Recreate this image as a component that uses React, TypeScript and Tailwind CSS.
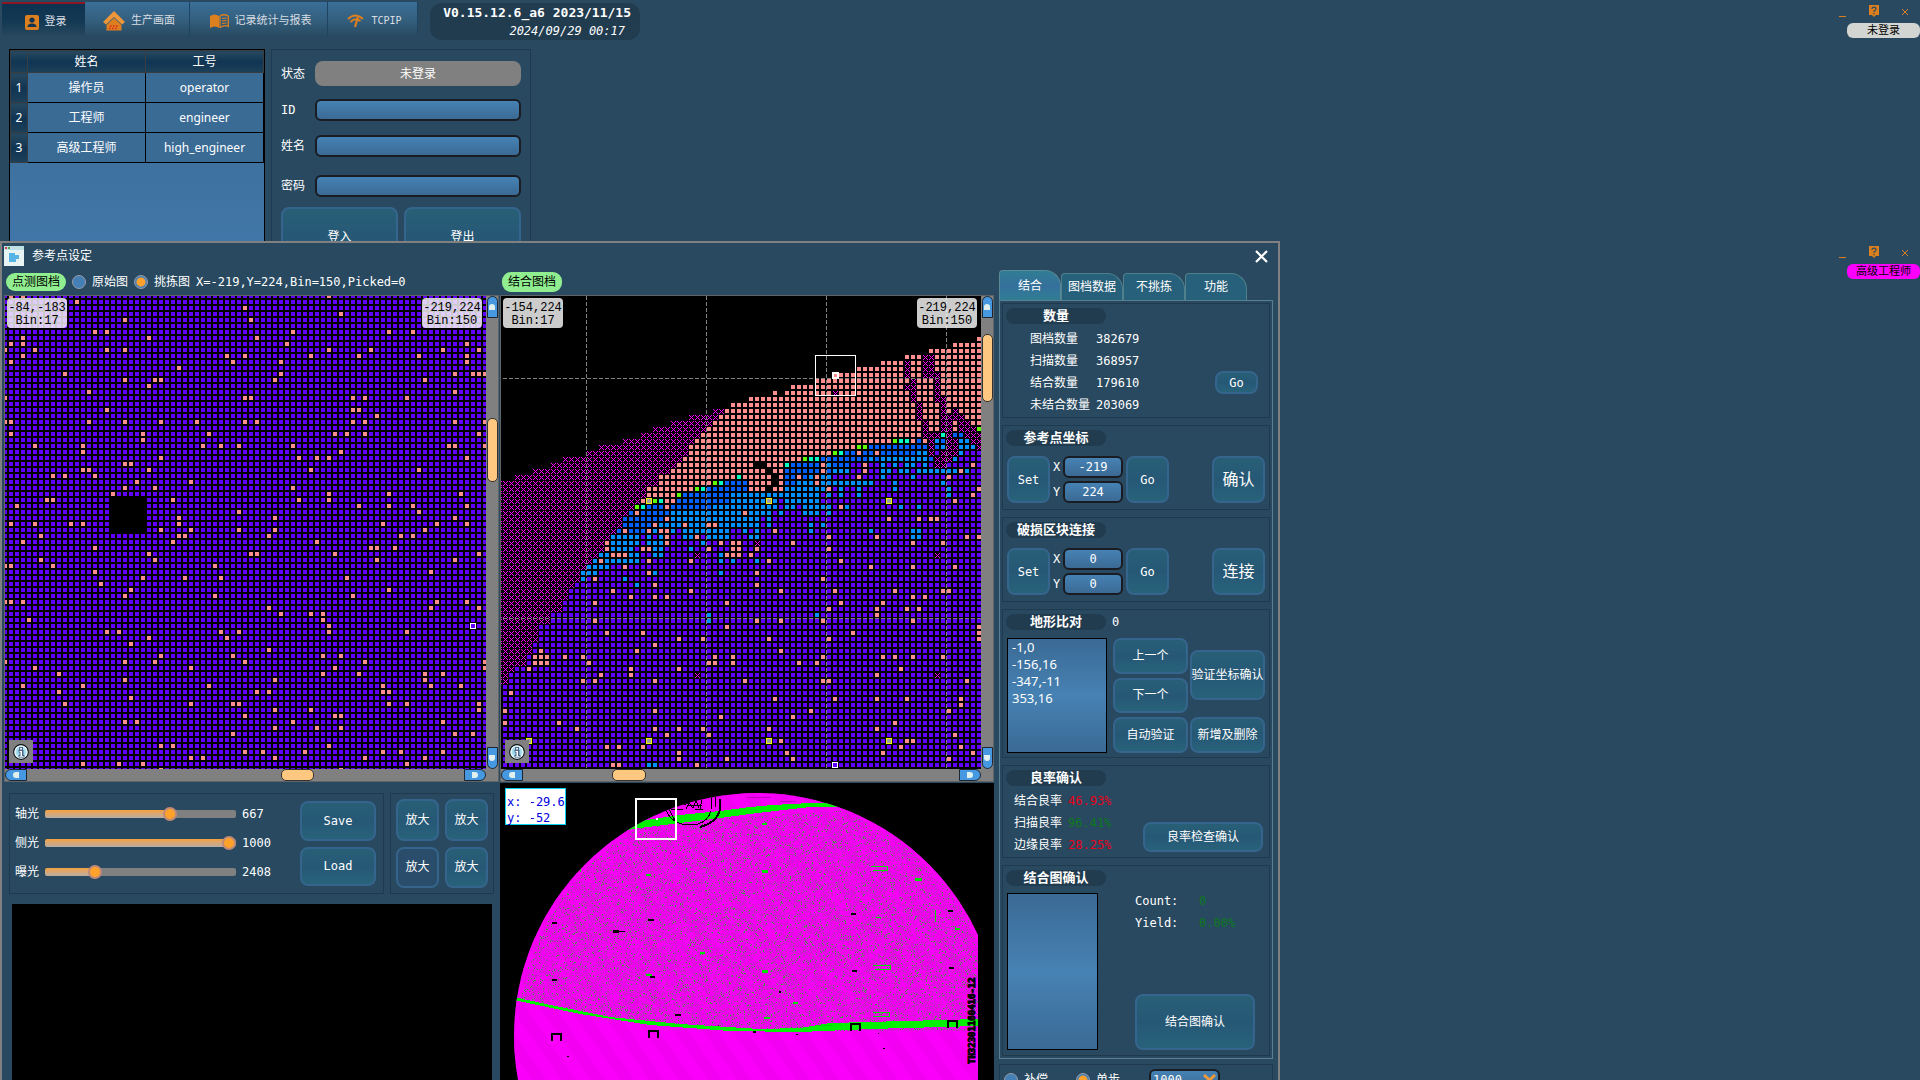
import React, { useState } from "react";
import type { ReactNode } from "react";

/* ---------- shared styles ---------- */

const btnBase =
  "flex items-center justify-center whitespace-nowrap rounded-lg border-2 border-[#35648c] bg-linear-to-b from-[#285f76] via-[#265876] to-[#28627a] text-white";
const btn = `${btnBase} text-xs`;
const field =
  "min-w-0 rounded-md border-2 border-[#191c22] bg-linear-to-b from-[#4682b4] to-[#3b6a94] text-xs text-white outline-none";
const box = "border border-[#1f3a4e]";

/* ---------- die maps ---------- */

const CELL = 6;

// Rejected dies of the probe map: one entry per row, columns separated by spaces.
const probeRows = [
  "1 3 54", "12", "40", "56", "20 41", "", "15 17 48 64 68", "3 24 42", "1 3 47 77",
  "0 5 17 20 54 61 73 79", "3 37 40 51 59 69 77", "1 38 46 77", "29", "10 46 75 78 79 80",
  "20 25 26 45 70", "24", "14 75", "0 40 41 58 60 67", "", "17 58 59", "62",
  "0 1 14 20 26 32 40 42 58 60 75 80", "", "1 23 34 55 57 60 79", "23",
  "5 13 33 36 39 48 74 75 80", "13 56", "26 49 52 54 77", "20 21", "13 14 24 51 69",
  "8 10 15", "22 31", "20 25 48", "18 54 64 76", "7 8 28 49 54", "2 59 64 68 77", "39 69",
  "29 45 75", "1 5 11 13 29 63 72 77", "26 31 39 45 70", "6 29 30 44 66 68", "3 28 52",
  "15 61 62 65", "24 41 42 55 79", "6 25 62 75", "0 1 8 35", "15 71", "23 30 36 57", "16",
  "21 64", "20 35 58", "0 1 3 72 77", "44 71 79", "46 51 53", "4 53", "54",
  "17 19 36 39 54 67", "24 37", "21", "44", "26 38 53 56", "0 20 25 40 60 80", "5 31 55 80",
  "9 53 59 70 73", "20 45 70", "3 13 34 63 71 76", "9 42 44 63 64", "21",
  "10 31 38 39 64 67 79", "45 51 79", "40 55 56", "20 22 48 73", "45 52 56", "38 75 78", "",
  "26 28 54", "40 43 50 63 66 73", "31 33 45 60 70", "13 19 23 67", "26 56",
];

// Combined map. "12v" starts a run of type v at column 12; "|p18 31" overrides single dies.
// m unmatched, p reject, v bin 150, s/b/c/l other bins, y reference die, k empty
const mergedRows: Record<number, string> = {
  7: "79p", 8: "75p", 9: "71p", 10: "67p 70m 72p", 11: "63p 67m 68p 70m 72p",
  12: "59p 67m 68p 70m 72p", 13: "55p 67m 68p 70m 73p", 14: "52p 68m 69p 72m 73p",
  15: "48p 67m 69p 72m 73p", 16: "45p 46k 47p 55m 56p 68m 69p 72m 73p",
  17: "41p 68m 69p 72m 74p", 18: "38p 69m 70p 73m 74p",
  19: "35m 37p 69m 70p 73m 74p 75m 76p", 20: "31m 36p 69m 70p 73m 77p",
  21: "28m 35p 70m 71p 73m 75p 76m 78p", 22: "25m 34p 70m 71p 73m 75p 76m 79l",
  23: "23m 33p 70m 73c 74m 75b 77m",
  24: "20m 32p 65l 66c 68p 69b 70p 71m 72s 73b 74m 76s 78m",
  25: "16m 31p 59l 61b 71m 72b 73s 74m 76s 79m",
  26: "14m 31p 55l 56c 57b 59p 60b 62p 63b 69s 71m 72v 73m 76s 77v",
  27: "10m 30p 50l 51c 53b 61s 62b 63s 71b 72m 75s 76v",
  28: "8m 29p 42k 44p 47c 48b 53p 54s 55b 58v 60p 61v 63s 64v 65s 66v 67s 69v 70s 71v 72m 74v 78p 79v",
  29: "5m 28p 44k 45p 47b 53p 54b 55s 58v 60p 61v 63s 65v 66s 68v 69s 76p 77s 78v",
  30: "2m 26p 39c 40p 45k 46p 47b 49p 50b 51s 52p 53s 55v 59p 60v 63s 64v 68s 69v 74p 75v",
  31: "-1m 26p 35l 36c 37b 41p 45k 46p 47b 49s 52p 53s 62v 65s 66v 73s 74v",
  32: "-1m 24p 32l 33c 34b 41p 44k 45p 47s 54p 55v 56s 57v|s59 65 74|p79",
  33: "-1m 24p 29l 30b 38s 53v 54s 55v|s56 59 74|p78",
  34: "-1m 23p 24y 25l 26c 27p 29b 38s 53v|v46|y44 64|p75",
  35: "-1m 22l 23c 24b 35s 55v|v46 49|p27 56|s57 66 69",
  36: "-1m 21b 28s 45v|p22 40|s46 50 51 52 54",
  37: "-1m 20b 28s 43v|p27 64 69 71 72|s44",
  38: "-1m 20b 26s 43v|p25 30 34 35|s44 51 53",
  39: "-1m 19b 24s 38v|p20 24 26 27 45|v29|s40 42 51 61 68 69",
  40: "-1m 18s 38v|v23 25 28 29 33|p27 32 54 62 77 79|s41 42 68 69",
  41: "-1m 17p 18s 27v|v23|p27 36 38 39 48 68 73|s33|m42",
  42: "-1m 17p 18s 22v|p23 24 34 38 39 42 54|s25 26 31",
  43: "-1m 16s 23v|p18 19 20 37 38 39 41|s25 26 36|m32 72",
  44: "-1m 15s 23v|p16 24 31 44 56|s36 38 42",
  45: "-1m 14s 18v|p20 61 68 75",
  46: "-1m 13s 16v|p24 42|s25 36",
  47: "-1m 13s 14v|p15 53|s20",
  48: "-1m 12v|s22|p25 42",
  49: "-1m 11v|p18 31 46 55 65 73 74",
  50: "-1m 11v|p21 25 27 68 70",
  51: "-1m 10v|p15 37 56 63",
  52: "-1m 10v|p54 62 67 69",
  53: "-1m 8v|s34 52|p62",
  54: "-1m 8v|p15 42 46 53 68|s34",
  55: "-1m 6v|p37 79",
  56: "-1m 6v|p17 23 58 79",
  57: "-1m 6v|p29 33 44 54 79",
  58: "-1m 5v|p25",
  59: "-1m 5v|p6 22 46",
  60: "-1m 4v|p5 6 7 10 13 35 38 53 63 65 68 73",
  61: "-1m 4v|p5 6 7 14 34 35 38 49 52",
  62: "-1m 2v|p4 21 29 66",
  63: "-1m 1v|p16 21 62|m32 72",
  64: "-1m 1v|p13 15 25 40 53 54 77",
  65: "0v", 66: "0v|p1", 67: "0v|p45 55 62 67 76", 68: "0v|p76", 69: "0v|p0 25 51 74",
  70: "0v|p36 48", 71: "0v|p0 9 65", 72: "0v|p12 25 29 33 44 62", 73: "0v|p27 34 75",
  74: "0v|p46 67 68|y4 24 44 64", 75: "0v|p17 19 23 66 76", 76: "0v|p29 47 63 78",
  77: "0v|p29 37 48 74", 78: "0v|p18 19 32|s24 25",
};

const dieColors: Record<string, string> = {
  p: "#ff8f8f", v: "#6200ff", s: "#0090ff", b: "#0060ff", c: "#00ffc0", l: "#60ff00", y: "#a0a0a0",
};

const die = (x: number, y: number) => `M${x} ${y}h4v4h-4z`;

const probePath = probeRows
  .map((row, r) =>
    row.split(" ").filter(Boolean).map((c) => die(-2 + CELL * Number(c), -2 + CELL * r)).join(""),
  )
  .join("");

function buildMerged() {
  const paths: Record<string, string> = { p: "", v: "", s: "", b: "", c: "", l: "", y: "", m: "" };
  for (const [key, spec] of Object.entries(mergedRows)) {
    const row = Number(key);
    const [runs, ...singles] = spec.split("|");
    const types = new Map<number, string>();
    const tokens = runs.split(" ");
    tokens.forEach((token, i) => {
      const start = parseInt(token, 10);
      const end = i + 1 < tokens.length ? parseInt(tokens[i + 1], 10) : 80;
      for (let c = start; c < end; c++) types.set(c, token.slice(-1));
    });
    singles.forEach((s) => s.slice(1).split(" ").forEach((c) => types.set(Number(c), s[0])));
    types.forEach((t, c) => {
      const x = 2 + CELL * c;
      const y = -1 + CELL * row;
      if (t === "k") return;
      paths[t] += t === "m" ? `M${x} ${y}h6v6h-6z` : die(x, y);
    });
  }
  return paths;
}
const merged = buildMerged();

function ProbeMap() {
  return (
    <svg className="block bg-black" width="481" height="473" shapeRendering="crispEdges" aria-label="点测图档">
      <defs>
        <pattern id="dies" x="-2" y="-2" width="6" height="6" patternUnits="userSpaceOnUse">
          <rect width="4" height="4" fill="#6200ff" />
        </pattern>
      </defs>
      <rect width="481" height="473" fill="url(#dies)" />
      <path d={probePath} fill="#ff8f8f" />
      <rect x="104" y="200" width="38" height="38" fill="#000" />
      <rect x="465" y="327" width="6" height="6" fill="#000" />
      <rect x="466" y="328" width="4" height="4" fill="#6200ff" />
      <path d="M465.500 327.500h5v5h-5z" fill="none" stroke="#fff" />
    </svg>
  );
}

function MergedMap() {
  return (
    <svg className="block bg-black" width="480" height="473" shapeRendering="crispEdges" aria-label="结合图档">
      <defs>
        <pattern id="crosses" x="2" y="-1" width="6" height="6" patternUnits="userSpaceOnUse">
          <path
            d="M0 0h1v1h-1zM4 0h1v1h-1zM1 1h1v1h-1zM3 1h1v1h-1zM2 2h1v1h-1zM1 3h1v1h-1zM3 3h1v1h-1zM0 4h1v1h-1zM4 4h1v1h-1z"
            fill="#ff00ff"
          />
        </pattern>
      </defs>
      <path d={merged.m} fill="url(#crosses)" />
      {Object.entries(dieColors).map(([t, color]) => (
        <path key={t} d={merged[t]} fill={color} />
      ))}
      <path
        d="M85.500 0V473M205.500 0V473M325.500 0V473M445.500 0V473M2 82.500H480M2 322.500H480"
        stroke="#808080"
        strokeDasharray="4 2"
      />
      {[[144, 202], [264, 202], [384, 202], [24, 442], [144, 442], [264, 442], [384, 442]].map(([x, y]) => (
        <path key={`${x}-${y}`} d={`M${x + 1.5} ${y + 0.5}h5v5h-5z`} fill="#a0a0a0" stroke="#f0f000" />
      ))}
      <path d="M314.500 59.500h40v40h-40z" fill="none" stroke="#fff" />
      <path d="M332 77h5v5h-5z" fill="#ff8f8f" stroke="#fff" strokeWidth="2" />
      <path d="M331.500 466.500h5v5h-5z" fill="#6200ff" stroke="#fff" />
    </svg>
  );
}

/* ---------- wafer overview ---------- */

function specks(count: number, seed: number, width: number) {
  let s = seed;
  const next = () => (s = (s * 1664525 + 1013904223) % 4294967296) / 4294967296;
  let d = "";
  for (let i = 0; i < count; i++) {
    const x = Math.floor(next() * 465) + 14;
    const y = Math.floor(next() * 225) + 25;
    const limit = 215 + 33 * Math.sin((Math.min(x, 290) / 290) * 1.57);
    const top = 40 - (x - 130) * 0.06;
    if (y > limit || y < top || Math.hypot(x - 257, y - 253) > 240) continue;
    d += `M${x} ${y}h${1 + Math.floor(next() * width)}v1h-1z`;
  }
  return d;
}
const shadeSpecks = specks(22000, 31, 3);
const greySpecks = specks(13000, 7, 2);
const greenSpecks = specks(4500, 99, 2);

function WaferView() {
  return (
    <svg className="block h-full w-full" viewBox="0 0 494 297" preserveAspectRatio="xMinYMin slice" shapeRendering="crispEdges" aria-label="wafer">
      <defs>
        <clipPath id="wafer">
          <path d="M478 0V297H0V0z" />
        </clipPath>
        <clipPath id="disc">
          <circle cx="257" cy="253" r="243" />
        </clipPath>
        <pattern id="weave" width="24" height="40" patternUnits="userSpaceOnUse" patternTransform="rotate(-35)">
          <rect width="12" height="40" fill="#f000f0" />
        </pattern>
      </defs>
      <g clipPath="url(#wafer)">
        <g clipPath="url(#disc)">
          <rect width="494" height="297" fill="#fa00fa" />
          <rect width="494" height="297" fill="url(#weave)" opacity="0.7" />
          <path d={shadeSpecks} fill="#dc10dc" />
          <path d={greySpecks} fill="#b038b0" />
          <path d={greenSpecks} fill="#40a040" />
          <path
            d="M120 47L140 38L180 32L220 28L250 24L273 22L310 20L325 20L345 24L310 24L275 28L250 31L220 35L180 40L140 45L122 48z"
            fill="#00f000"
          />
          <path
            d="M14 214L60 224L110 234L180 241L260 246L300 245L330 240L478 236V243L370 246L300 249L230 248L150 242L80 231L14 217z"
            fill="#00f000"
          />
          <path
            d="M262 40h5v2h-5zM262 87h6v3h-6zM415 95h7v3h-7zM146 91h5v2h-5zM262 187h6v3h-6zM146 191h6v2h-6zM264 234h6v2h-6zM293 219h5v2h-5zM455 145h5v2h-5zM376 134h5v1h-5zM200 169h5v2h-5zM80 83h1v6h-1zM435 127h1v12h-1z"
            fill="#00e000"
          />
          <path d="M371 83h16v4h-14M373 182h17v4h-15M373 229h16v4h-16M315 242h18" fill="none" stroke="#00e000" />
          <path
            d="M52 139h5v2h-5zM52 196h5v2h-5zM113 147h6v3h-6zM119 148h6v1h-6zM148 136h6v2h-6zM150 193h5v2h-5zM175 231h6v2h-6zM351 130h5v2h-5zM352 187h5v2h-5zM448 127h5v2h-5zM449 184h5v2h-5zM279 208h2v2h-2zM253 248h3v2h-3zM296 251h2v1h-2zM378 250h1v1h-1zM67 273h2v1h-2zM383 265h2v1h-2zM218 242h1v1h-1z"
            fill="#000"
          />
          <path
            d="M52 258v-7h9v7M149 255v-7h9v7M351 248v-7h9v7M448 245v-7h9v7"
            fill="none"
            stroke="#000"
            strokeWidth="2"
          />
          <path
            d="M166 27Q170 38 182 41H198Q208 38 211 28M169 25Q172 34 176 38M211 12V26M215 12V24M171 26h12M176 24l6-3h4l4-2M186 26l3-6l4 5l3-8l3 8M184 18h8M195 26h8M188 22h14M192 16h10l-2 10"
            fill="none"
            stroke="#000"
          />
          <path d="M200 44Q216 40 220 27V16" fill="none" stroke="#000" strokeWidth="2" />
          <path d="M247 14h24M280 18h16" stroke="#c000c0" />
          <text
            transform="translate(475 281) rotate(-90)"
            className="font-['DejaVu_Sans_Mono',monospace] font-bold"
            fontSize="9"
            stroke="#000"
            strokeWidth="1"
          >
            TH32301160416-12
          </text>
        </g>
      </g>
      <path d="M136 16h40v40h-40z" fill="none" stroke="#fff" strokeWidth="2" />
      <rect x="156" y="35" width="2" height="2" fill="#fff" />
    </svg>
  );
}

/* ---------- scroll bars ---------- */

const arrow = "flex items-center justify-center border border-[#1c2733] bg-[#4699e0]";

function VBar({ before, thumb }: { before: string; thumb: string }) {
  return (
    <div className="flex flex-col items-center bg-[#808080]">
      <button aria-label="向上" className={`${arrow} h-[22px] w-[11px] rounded-t-md`}>
        <i className="h-[6px] w-[6px] rounded-t-sm bg-[#dff0ee]" />
      </button>
      <div className={before} />
      <div className={`${thumb} w-[11px] rounded-[5px] border border-[#333] bg-[#ffc880]`} />
      <div className="grow" />
      <button aria-label="向下" className={`${arrow} h-[22px] w-[11px] rounded-b-md`}>
        <i className="h-[6px] w-[6px] rounded-b-sm bg-[#dff0ee]" />
      </button>
    </div>
  );
}

function HBar({ before, thumb }: { before: string; thumb: string }) {
  return (
    <div className="flex items-center bg-[#808080]">
      <button aria-label="向左" className={`${arrow} h-[12px] w-[22px] rounded-l-md`}>
        <i className="h-[6px] w-[6px] rounded-l-sm bg-[#dff0ee]" />
      </button>
      <div className={before} />
      <div className={`${thumb} h-[12px] rounded-[5px] border border-[#333] bg-[#ffc880]`} />
      <div className="grow" />
      <button aria-label="向右" className={`${arrow} h-[12px] w-[22px] rounded-r-md`}>
        <i className="h-[6px] w-[6px] rounded-r-sm bg-[#dff0ee]" />
      </button>
    </div>
  );
}

function MapFrame(props: { map: ReactNode; left: string; right: string; bars: [string, string, string, string] }) {
  const tag =
    "absolute top-[2px] flex h-[30px] w-[60px] flex-col items-center justify-center rounded-sm bg-white/80 pt-[3px] font-['Liberation_Mono',monospace] text-xs leading-[13px] text-black";
  const { bars } = props;
  return (
    <div className="grid grid-cols-[auto_12px] grid-rows-[473px_12px] border border-[#5f6468] bg-[#808080]">
      <div className="relative">
        {props.map}
        <div className={`${tag} left-[2px]`}>
          <span>{props.left}</span>
          <span>Bin:17</span>
        </div>
        <div className={`${tag} right-[4px]`}>
          <span>{props.right}</span>
          <span>Bin:150</span>
        </div>
        <button aria-label="信息" className="absolute bottom-[6px] left-[4px] flex h-[23px] w-6 items-center justify-center bg-[#808080]">
          <svg width="16" height="16" viewBox="0 0 16 16">
            <circle cx="8" cy="8" r="7.300" fill="#a4dcec" stroke="#111" strokeWidth="1.200" />
            <circle cx="8" cy="8" r="6" fill="none" stroke="#f2fbff" strokeWidth="1.200" />
            <path d="M6 3h4v3h.5v5h1v2.500h-6V11h1V8.500h-1V6H6z" fill="#4a6488" />
            <path d="M7 4h2v1.500H7zM6.500 7H9v5h1.500v.8h-4V12h1V8h-1z" fill="#fff" />
          </svg>
        </button>
      </div>
      <VBar before={bars[0]} thumb={bars[1]} />
      <HBar before={bars[2]} thumb={bars[3]} />
    </div>
  );
}

/* ---------- small pieces ---------- */

function Radio({ name, label, checked }: { name: string; label: string; checked?: boolean }) {
  return (
    <label className="flex items-center gap-[6px]">
      <input
        type="radio"
        name={name}
        defaultChecked={checked}
        className="h-[14px] w-[14px] appearance-none rounded-full border border-[#9a9aa4] bg-[#4480b6] checked:bg-[radial-gradient(circle,#ffa12c_4px,#4480b6_5px)]"
      />
      {label}
    </label>
  );
}

function Heading({ children }: { children: ReactNode }) {
  return (
    <h3 className="ml-[3px] flex h-4 w-[100px] items-center justify-center rounded-full bg-[#213b4f] text-[13px] font-bold">
      {children}
    </h3>
  );
}

function SliderRow({ label, value, max }: { label: string; value: number; max: number }) {
  const [v, setV] = useState(value);
  return (
    <label className="flex h-[29px] items-center">
      <span className="w-[30px]">{label}</span>
      <input
        type="range"
        max={max}
        value={v}
        onChange={(e) => setV(Number(e.target.value))}
        className="h-2 w-[191px] appearance-none rounded-xs bg-[#808080] bg-linear-to-b from-[#f5a03a] to-[#b8aca0] bg-no-repeat [&::-webkit-slider-thumb]:h-[14px] [&::-webkit-slider-thumb]:w-[14px] [&::-webkit-slider-thumb]:appearance-none [&::-webkit-slider-thumb]:rounded-full [&::-webkit-slider-thumb]:border-2 [&::-webkit-slider-thumb]:border-[#c08a78] [&::-webkit-slider-thumb]:bg-[#ffa22a]"
        style={{ backgroundSize: `${Math.min(97, (v / max) * 100)}% 100%` }}
      />
      <span className="ml-[6px]">{v}</span>
    </label>
  );
}

function WindowControls({ user, tone }: { user: string; tone: string }) {
  return (
    <div className="flex w-[73px] flex-col text-[#dc7f1e]">
      <div className="mr-[11px] -ml-2 flex h-[23px] items-center justify-between">
        <button aria-label="最小化">
          <svg width="8" height="14"><path d="M0 11.500h7" stroke="currentColor" /></svg>
        </button>
        <button aria-label="帮助">
          <svg width="12" height="13">
            <path d="M1 0h10v10H8l-2 2-2-2H1z" fill="currentColor" />
            <path d="M4 4Q4 2.200 6 2.200T8 4Q8 5 6 6v1M6 8v1.200" fill="none" stroke="#28495f" strokeWidth="1.200" />
          </svg>
        </button>
        <button aria-label="关闭">
          <svg width="8" height="8"><path d="M1 1l6 6M7 1l-6 6" stroke="currentColor" /></svg>
        </button>
      </div>
      <span className={`flex h-[15px] items-center justify-center rounded-md pt-px text-[11px] text-black ${tone}`}>{user}</span>
    </div>
  );
}

/* ---------- main window ---------- */

const orange = "#dc7f1e";
const navIcons = {
  user: (
    <svg width="14" height="15" viewBox="0 0 14 15">
      <rect width="14" height="15" rx="2" fill={orange} />
      <circle cx="7" cy="5" r="2.600" fill="#0f3350" />
      <path d="M2.500 12q0-3.500 4.500-3.500t4.500 3.500z" fill="#0f3350" />
    </svg>
  ),
  home: (
    <svg width="22" height="20" viewBox="0 0 22 20">
      <path d="M11 0L22 11l-3 2.500L11 6l-8 7.500L0 11z" fill="#f0963a" />
      <path d="M11 7l7.500 7V19.500h-15V14z" fill="#dc7f1e" />
      <path d="M7 15h1.500M10 15h1.500M13 15h1.500M6 17.500h1.500M9 17.500h1.500M12 17.500h1.500" stroke="#e02020" strokeWidth="1.500" />
    </svg>
  ),
  book: (
    <svg width="19" height="14" viewBox="0 0 19 14">
      <path d="M0 2q5-3 9 0v12q-4-3-9 0z" fill={orange} />
      <path d="M10 2q4-2.500 8.300 0v10.500q-4-2-8.300 1z" fill="none" stroke={orange} strokeWidth="1.300" />
      <path d="M12 4.500l4.500-.5M12 7l4.500-.5M12 9.500l4.500-.5" stroke={orange} strokeWidth="1.200" />
    </svg>
  ),
  net: (
    <svg width="18" height="14" viewBox="0 0 18 14">
      <path d="M1 5q7-7 15 0M3.500 8q5-5 10-1" fill="none" stroke={orange} strokeWidth="1.800" />
      <path d="M11 3l-3 10" stroke={orange} strokeWidth="2.200" />
    </svg>
  ),
};

const people = [["操作员", "operator"], ["工程师", "engineer"], ["高级工程师", "high_engineer"]];

function NavTab({ icon, text, width, active }: { icon: ReactNode; text: string; width: string; active?: boolean }) {
  return (
    <a
      href="#"
      className={`${width} flex items-center justify-center gap-[6px] pt-[3px] text-[#d8dde2] ${
        active
          ? "border-t-2 border-[#8c1622] bg-linear-to-b from-[#0e3350] via-[#123853] to-[#28495f] pl-1"
          : "border-r border-[#1f4462] bg-linear-to-b from-[#3a6e98] via-[#34607f] to-[#28495f] pl-1"
      }`}
    >
      {icon}
      {text}
    </a>
  );
}

function MainWindow() {
  const th = "border border-[#3a3d42] bg-linear-to-b from-[#28495f] via-[#0f3554] to-[#1d4058] font-normal";
  return (
    <div className="flex flex-col">
      <header className="flex items-start">
        <nav className="mt-[2px] ml-[2px] flex h-[35px] text-[11px]">
          <NavTab icon={navIcons.user} text="登录" width="w-[83px]" active />
          <NavTab icon={navIcons.home} text="生产画面" width="w-[105px]" />
          <NavTab icon={navIcons.book} text="记录统计与报表" width="w-[138px]" />
          <div className="flex text-[10px]">
            <NavTab icon={navIcons.net} text="TCPIP" width="w-[90px]" />
          </div>
        </nav>
        <div className="mt-[3px] ml-3 flex h-[37px] w-[210px] flex-col items-end rounded-xl bg-[#213b4f] px-[9px]">
          <strong className="text-[13px] leading-5">V0.15.12.6_a6 2023/11/15</strong>
          <em className="mr-[6px] leading-4">2024/09/29 00:17</em>
        </div>
        <div className="ml-auto">
          <WindowControls user="未登录" tone="bg-[#d2d5d2]" />
        </div>
      </header>
      <main className="mt-[9px] ml-[9px] flex items-stretch gap-[6px]">
        <div className="h-[230px] w-[256px] border border-black bg-linear-to-b from-[#3a6a94] to-[#4279ac]">
          <table className="w-full table-fixed border-collapse text-[13px]">
            <thead>
              <tr className="h-[22px] text-xs">
                <th className={`${th} w-[17px]`} />
                <th className={th}>姓名</th>
                <th className={th}>工号</th>
              </tr>
            </thead>
            <tbody>
              {people.map(([name, id], i) => (
                <tr key={id} className="h-[30px] bg-[#3a6b95] text-center font-['Noto_Sans','Noto_Sans_CJK_SC',sans-serif] text-xs">
                  <th className={th}>{i + 1}</th>
                  <td className="border border-black">{name}</td>
                  <td className="border border-black">{id}</td>
                </tr>
              ))}
            </tbody>
          </table>
        </div>
        <form className={`${box} grid w-[260px] grid-cols-[34px_86px_1fr] content-start items-center px-[9px] pt-[11px]`}>
          <span>状态</span>
          <output className="col-span-2 flex h-[25px] items-center justify-center rounded-lg bg-[#808080]">未登录</output>
          <label htmlFor="uid" className="mt-[13px]">ID</label>
          <input id="uid" className={`${field} col-span-2 mt-[13px] h-[22px]`} />
          <label htmlFor="uname" className="mt-[14px]">姓名</label>
          <input id="uname" className={`${field} col-span-2 mt-[14px] h-[22px]`} />
          <label htmlFor="upass" className="mt-[18px]">密码</label>
          <input id="upass" type="password" className={`${field} col-span-2 mt-[18px] h-[22px]`} />
          <div className="col-span-3 mt-[10px] grid grid-cols-2 gap-[6px]">
            <button type="button" className={`${btn} h-[60px]`}>登入</button>
            <button type="button" className={`${btn} h-[60px]`}>登出</button>
          </div>
        </form>
      </main>
    </div>
  );
}

/* ---------- side panel ---------- */

function PointGroup({ id, title, x, y, action }: { id: string; title: string; x: string; y: string; action: string }) {
  return (
    <section className={`${box} pt-1 pb-[6px]`}>
      <Heading>{title}</Heading>
      <div className="mt-[10px] flex h-[47px] px-1">
        <button className={`${btn} w-[43px]`}>Set</button>
        <div className="mx-[3px] flex w-[70px] flex-col gap-[3px]">
          {[["X", x], ["Y", y]].map(([axis, value]) => (
            <div key={axis} className="flex h-[22px] items-center gap-[3px]">
              <label htmlFor={`${id}${axis}`} className="w-[7px]">{axis}</label>
              <input id={`${id}${axis}`} defaultValue={value} className={`${field} h-[22px] w-[60px] text-center`} />
            </div>
          ))}
        </div>
        <button className={`${btn} w-[43px]`}>Go</button>
        <button className={`${btnBase} ml-auto w-[53px] text-base`}>{action}</button>
      </div>
    </section>
  );
}

const counts = [["图档数量", "382679"], ["扫描数量", "368957"], ["结合数量", "179610"], ["未结合数量", "203069"]];
const yields = [
  ["结合良率", "46.93%", "text-[#e8001c]"],
  ["扫描良率", "96.41%", "text-[#0c7a1c]"],
  ["边缘良率", "28.25%", "text-[#e8001c]"],
];

function SidePanel() {
  return (
    <div className="mt-px ml-[5px] flex w-[274px] flex-col">
      <div role="tablist" className="flex h-[30px] items-end">
        <button role="tab" aria-selected="true" className="h-[30px] w-[62px] rounded-tl-sm rounded-tr-2xl border border-b-0 border-[#5a8a96] bg-linear-to-b from-[#307d94] via-[#35709c] to-[#307d94] text-center">
          结合
        </button>
        {["图档数据", "不挑拣", "功能"].map((t) => (
          <button key={t} role="tab" aria-selected="false" className="h-[27px] w-[62px] rounded-tl-sm rounded-tr-2xl border border-b-0 border-[#50808c] bg-[#27607a] text-center whitespace-nowrap">
            {t}
          </button>
        ))}
      </div>
      <div className="flex flex-col gap-[7px] border border-[#5a8090] p-[2px]">
        <section className={`${box} pt-1 pb-px`}>
          <Heading>数量</Heading>
          <div className="mt-1 flex items-start">
            <dl className="ml-[27px] grid grid-cols-[66px_auto] leading-[22px]">
              {counts.map(([k, v]) => (
                <React.Fragment key={k}>
                  <dt className="whitespace-nowrap">{k}</dt>
                  <dd>{v}</dd>
                </React.Fragment>
              ))}
            </dl>
            <button className={`${btn} mt-[43px] mr-[11px] ml-auto h-[23px] w-[43px]`}>Go</button>
          </div>
        </section>
        <PointGroup id="ref" title="参考点坐标" x="-219" y="224" action="确认" />
        <PointGroup id="dmg" title="破损区块连接" x="0" y="0" action="连接" />
        <section className={`${box} pt-1 pb-1`}>
          <div className="flex items-center gap-[6px]">
            <Heading>地形比对</Heading>
            <span>0</span>
          </div>
          <div className="mt-2 flex h-[115px] px-1">
            <ul className="w-[100px] border border-black bg-linear-to-b from-[#3b6a94] via-[#4682b4] to-[#3b6a94] px-1 font-['Noto_Sans',sans-serif] text-[13px] leading-[17px]">
              {["-1,0", "-156,16", "-347,-11", "353,16"].map((v) => (
                <li key={v}>{v}</li>
              ))}
            </ul>
            <div className="ml-[6px] grid w-[75px] gap-1">
              <button className={btn}>上一个</button>
              <button className={btn}>下一个</button>
              <button className={btn}>自动验证</button>
            </div>
            <div className="ml-[2px] flex w-[75px] flex-col justify-between pt-3">
              <button className={`${btn} h-[50px]`}>验证坐标确认</button>
              <button className={`${btn} h-9`}>新增及删除</button>
            </div>
          </div>
        </section>
        <section className={`${box} pt-1 pb-px`}>
          <Heading>良率确认</Heading>
          <div className="mt-1 flex items-end">
            <dl className="ml-[11px] grid grid-cols-[54px_auto] leading-[22px]">
              {yields.map(([k, v, tone]) => (
                <React.Fragment key={k}>
                  <dt>{k}</dt>
                  <dd className={tone}>{v}</dd>
                </React.Fragment>
              ))}
            </dl>
            <button className={`${btn} mr-[6px] mb-1 ml-auto h-[30px] w-[120px]`}>良率检查确认</button>
          </div>
        </section>
        <section className={`${box} pt-1 pb-[5px]`}>
          <Heading>结合图确认</Heading>
          <div className="mt-[7px] flex h-[157px] pl-1">
            <div className="w-[91px] border border-black bg-linear-to-b from-[#3b6a94] via-[#4682b4] to-[#3b6a94]" />
            <div className="ml-[37px] flex flex-col justify-between">
              <dl className="-mt-[3px] grid grid-cols-[64px_auto] leading-[22px]">
                <dt>Count:</dt>
                <dd className="text-[#0c7a1c]">0</dd>
                <dt>Yield:</dt>
                <dd className="text-[#0c7a1c]">0.00%</dd>
              </dl>
              <button className={`${btn} h-[56px] w-[120px]`}>结合图确认</button>
            </div>
          </div>
        </section>
      </div>
      <div className={`${box} mt-[5px] flex items-center pt-1 pl-1`}>
        <Radio name="step" label="补偿" />
        <span className="w-7" />
        <Radio name="step" label="单步" checked />
        <div className="relative ml-[29px]">
          <select aria-label="步距" className={`${field} block h-[22px] w-[71px] appearance-none pl-[2px]`}>
            <option>1000</option>
          </select>
          <svg className="pointer-events-none absolute top-[4px] right-[4px]" width="13" height="13">
            <path d="M1 2l5.500 5L12 2M1 12l5.500-5L12 12" fill="none" stroke="#f09a3c" strokeWidth="3" />
          </svg>
        </div>
      </div>
    </div>
  );
}

/* ---------- dialog ---------- */

const green = "flex w-[60px] items-center justify-center rounded-[9px] bg-[#90ee90] text-black";

function ReferenceDialog() {
  return (
    <div role="dialog" aria-label="参考点设定" className="absolute top-[241px] bottom-0 left-0 flex w-[1280px] flex-col overflow-hidden border-2 border-b-0 border-[#808080] bg-[#28495f]">
      <div className="flex h-[26px] shrink-0 items-center pr-[10px] pl-[2px]">
        <svg width="20" height="20" viewBox="0 0 20 20" aria-hidden="true">
          <rect width="20" height="20" fill="#e8f4f4" />
          <rect width="20" height="4" fill="#bfe0e4" />
          <path d="M1 1h2v2h-2z" fill="#d04040" />
          <path d="M4 1h2v2h-2z" fill="#50a050" />
          <path d="M5 7h6v2h4v4h-3v3h-7z" fill="#58b4e4" />
        </svg>
        <h2 className="ml-2 text-xs">参考点设定</h2>
        <button aria-label="关闭" className="ml-auto">
          <svg width="13" height="13"><path d="M1 1l11 11M12 1l-11 11" stroke="#fff" strokeWidth="2.200" /></svg>
        </button>
      </div>
      <div className="flex min-h-0 grow">
        <div className="ml-[2px] flex w-[495px] flex-col">
          <div className="flex h-[26px] shrink-0 items-center gap-[6px] pl-[2px]">
            <span className={`${green} h-[18px]`}>点测图档</span>
            <Radio name="view" label="原始图" />
            <Radio name="view" label="挑拣图" checked />
            <span className="whitespace-nowrap">X=-219,Y=224,Bin=150,Picked=0</span>
          </div>
          <MapFrame map={<ProbeMap />} left="-84,-183" right="-219,224" bars={["h-[100px]", "h-[64px]", "w-[254px]", "w-[33px]"]} />
          <div className="mt-[11px] ml-[5px] flex h-[101px] shrink-0 gap-[6px]">
            <div className={`${box} flex w-[375px] justify-between pr-[7px] pl-[5px]`}>
              <div className="pt-[5px]">
                <SliderRow label="轴光" value={667} max={1000} />
                <SliderRow label="侧光" value={1000} max={1000} />
                <SliderRow label="曝光" value={2408} max={10000} />
              </div>
              <div className="my-[7px] grid w-[76px] gap-[6px]">
                <button className={btn}>Save</button>
                <button className={btn}>Load</button>
              </div>
            </div>
            <div className={`${box} grid w-[104px] grid-cols-2 gap-[6px] p-[5px]`}>
              <button className={btn}>放大</button>
              <button className={btn}>放大</button>
              <button className="flex items-center justify-center rounded-lg border-2 border-[#35648c] bg-[#294d6b]">放大</button>
              <button className={btn}>放大</button>
            </div>
          </div>
          <div className="mt-[10px] mr-[7px] ml-2 grow bg-black" />
        </div>
        <div className="ml-px flex w-[494px] flex-col">
          <div className="flex h-[26px] shrink-0 items-center pl-[2px]">
            <span className={`${green} h-5`}>结合图档</span>
          </div>
          <MapFrame map={<MergedMap />} left="-154,224" right="-219,224" bars={["h-[16px]", "h-[68px]", "w-[89px]", "w-[34px]"]} />
          <div className="relative mt-px min-h-0 grow bg-black">
            <WaferView />
            <div className="absolute top-[5px] left-[5px] h-[37px] w-[61px] border border-cyan-400 bg-white pt-[5px] pl-px leading-4 whitespace-pre text-[#0000e0]">
              {"x: -29.6\ny: -52"}
            </div>
          </div>
        </div>
        <SidePanel />
      </div>
    </div>
  );
}

export default function App() {
  return (
    <div className="relative h-screen w-full overflow-hidden bg-[#28495f] font-['DejaVu_Sans_Mono','Noto_Sans_CJK_SC',monospace] text-xs text-white">
      <MainWindow />
      <div className="absolute top-[241px] right-0">
        <WindowControls user="高级工程师" tone="bg-[#ff00ff]" />
      </div>
      <ReferenceDialog />
    </div>
  );
}
